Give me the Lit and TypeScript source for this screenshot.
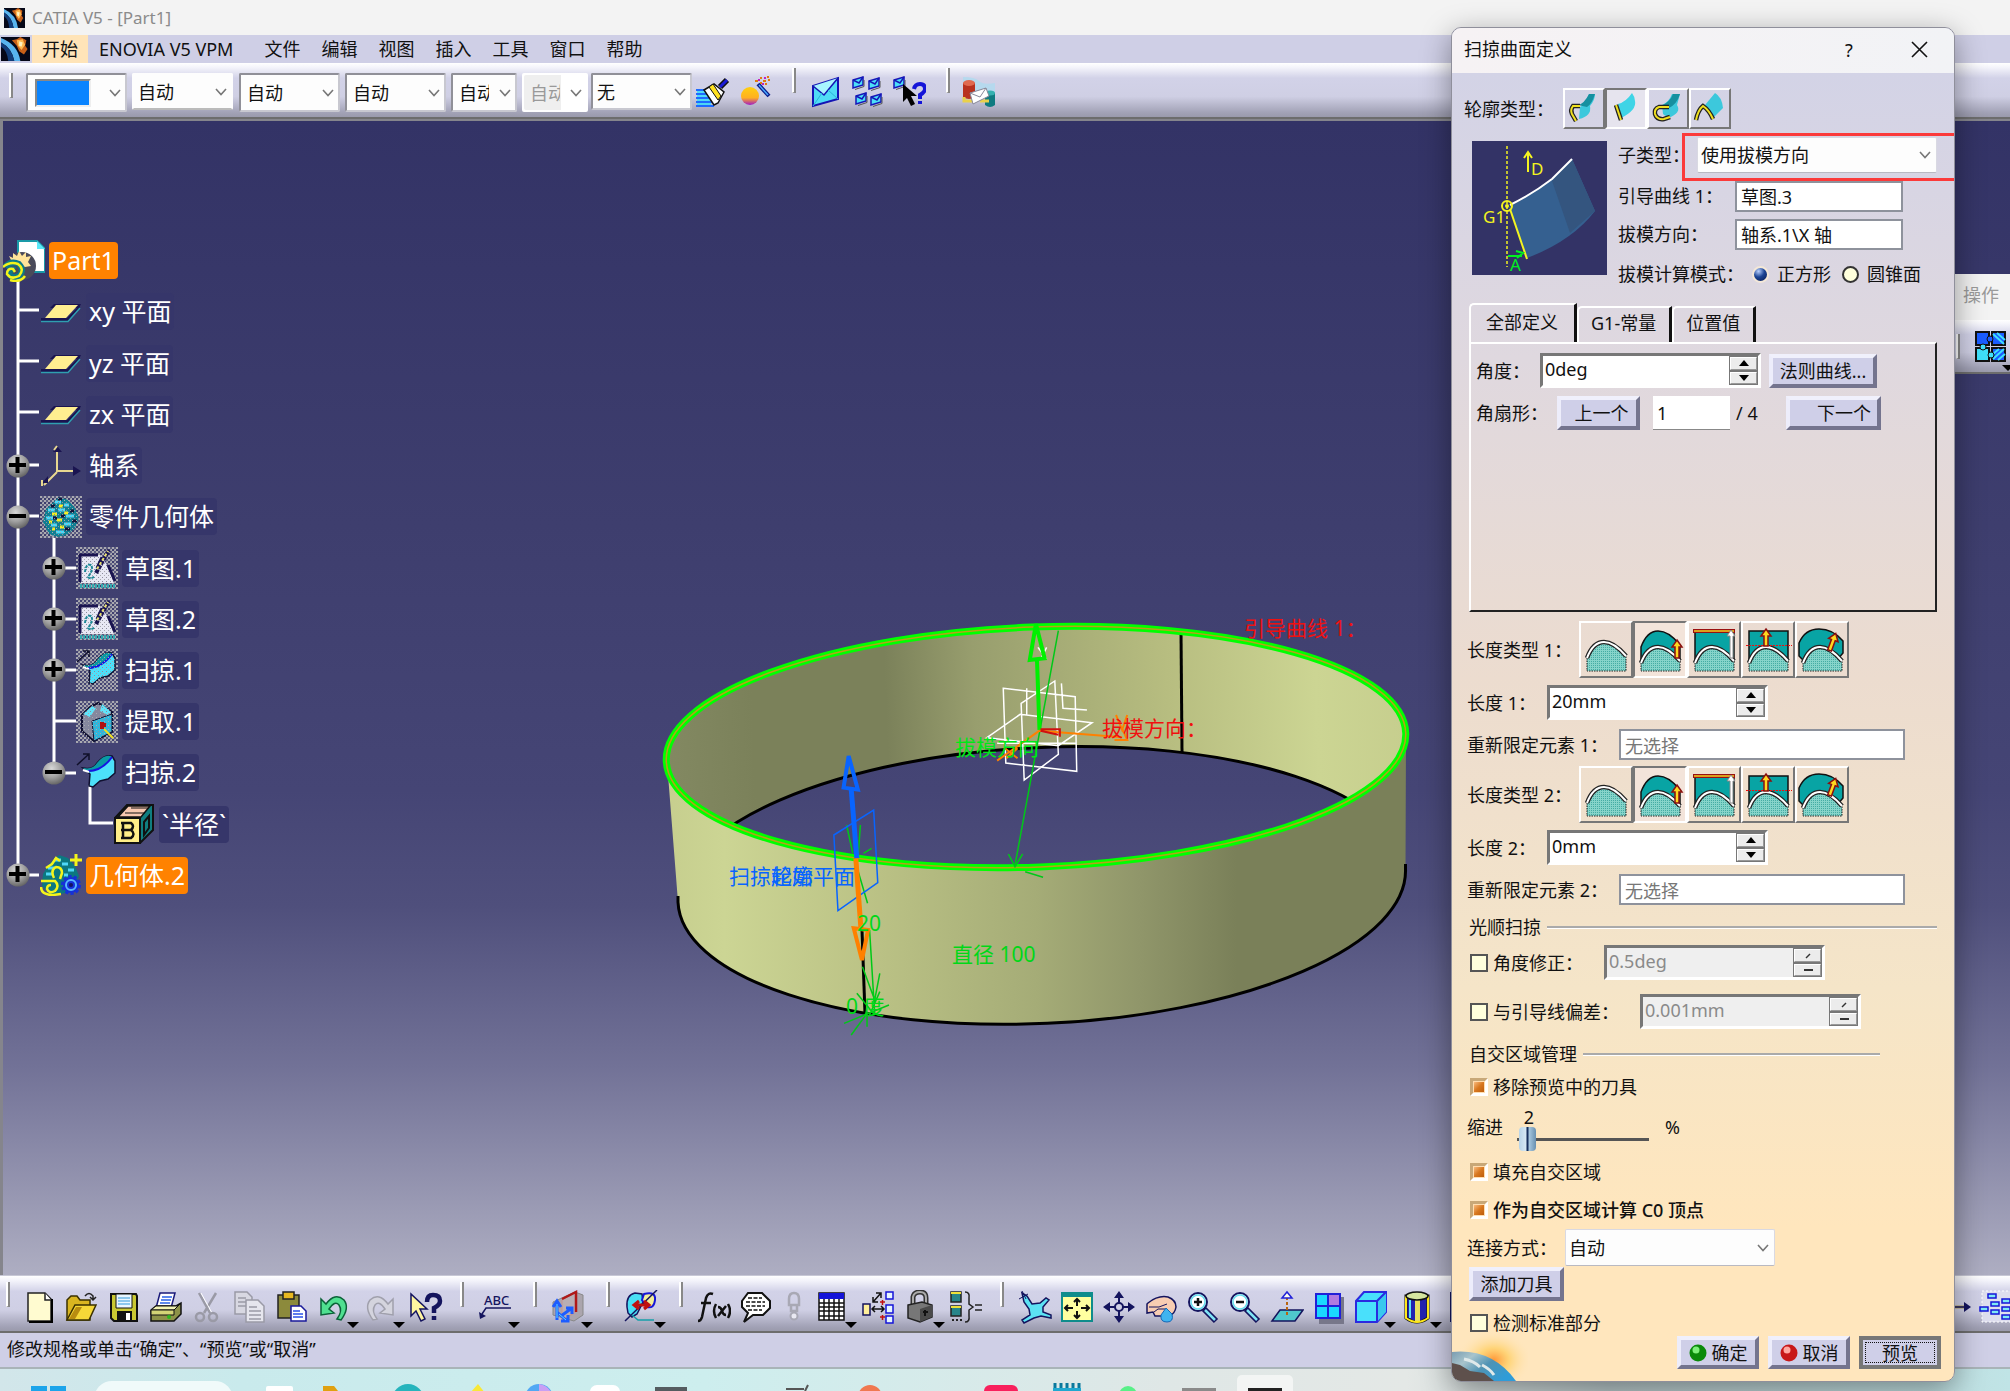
import { LitElement, html, svg, css } from "lit";
import type { TemplateResult, SVGTemplateResult } from "lit";
import { customElement } from "lit/decorators.js";
import { classMap } from "lit/directives/class-map.js";

/* ---------- shared look ---------- */

const base = css`
  :host {
    box-sizing: border-box;
    font-family: "Noto Sans", "Noto Sans CJK SC", sans-serif;
    font-size: 18px;
    line-height: 24px;
    color: #111;
  }
  *,
  *::before,
  *::after {
    box-sizing: border-box;
  }
  button,
  input,
  select {
    font: inherit;
    color: inherit;
    margin: 0;
    padding: 0;
    border: 0;
    border-radius: 0;
    background: none;
  }
  svg {
    display: block;
    flex: none;
  }
  .combo {
    position: relative;
    display: flex;
    align-items: stretch;
  }
  .combo select {
    appearance: none;
    width: 100%;
    background: #fdfdfd;
    border: 1px solid #d9d9e2;
    border-bottom-color: #b9b9c2;
    border-radius: 2px;
    padding: 0 28px 0 3px;
    overflow: hidden;
    opacity: 1;
  }
  .combo .chevron {
    position: absolute;
    right: 6px;
    top: 50%;
    margin-top: -4px;
    pointer-events: none;
  }
`;

const chevron = html`<svg class="chevron" width="12" height="8" viewBox="0 0 12 8" fill="none" stroke="#777" stroke-width="1.6"><path d="M1 1l5 5.5L11 1" /></svg>`;

const icon = (body: SVGTemplateResult, w = 34, h = 34) =>
  html`<svg width=${w} height=${h} viewBox="0 0 ${w} ${h}" aria-hidden="true">${body}</svg>`;

/* ---------- toolbar glyphs (34 x 34) ---------- */

const mail = (x: number, y: number) => svg`<g transform="translate(${x} ${y})"><path d="M1 3l10-3v8L1 11z" fill="#4ce0f8" stroke="#1616b8" stroke-width="1.5"/><path d="M1 3l6 3 4-6" fill="none" stroke="#1616b8" stroke-width="1.5"/><path d="M3 12.500l9-3V3" stroke="#555" fill="none"/></g>`;
const lens = (sign: SVGTemplateResult) => svg`<path d="M18 19l12 12" stroke="#14145e" stroke-width="6"/><path d="M19 20l10 10" stroke="#7fe4f5" stroke-width="2.500"/><circle cx="12" cy="12" r="9" fill="#e8fbff" stroke="#14145e" stroke-width="2"/><circle cx="12" cy="12" r="7" fill="#fff" stroke="#69dff0" stroke-width="1.500"/>${sign}`;

const glyph = {
  brush: svg`<path d="M0 15h18M0 19h20M0 23h18M0 27h22M0 31h18" stroke="#1f6bff" stroke-width="2"/><path d="M1 17h14M1 21h14M1 25h14M1 29h14" stroke="#29e0ff" stroke-width="1.500"/><path d="M8 15l10-6 10 8-6 11-4 2z" fill="#fff" stroke="#111" stroke-width="1.500"/><path d="M13 12l9 13 3-4-8-12z" fill="#ffe11f" stroke="#111"/><path d="M24 12l7-7" stroke="#111" stroke-width="6"/><path d="M24 12l7-7" stroke="#1b1bd8" stroke-width="3"/>`,
  wand: svg`<circle cx="12" cy="21" r="9" fill="url(#ball)"/><path d="M20 9l11 12" stroke="#0a1a8a" stroke-width="4"/><path d="M21 10l9 10" stroke="#4aa8ff" stroke-width="1.500"/><path d="M17 6h3M22 3h2M25 6h3M29 2h2M22 8h2M27 9h2M30 5h2" stroke="#e07a10" stroke-width="2"/><path d="M20 5h2M26 3h2M24 9h2" stroke="#c31fc3" stroke-width="2"/>`,
  envelope: svg`<path d="M5 11L30 3v21L5 31z" fill="#4fdcf6" stroke="#1414b4" stroke-width="2"/><path d="M5 11l11 9L30 3" fill="#a8f4ff" stroke="#1414b4" stroke-width="1.500"/><path d="M5 31l9-13M30 24l-10-9" stroke="#2bb4d8"/>`,
  mails: svg`${mail(2, 2)}${mail(18, 3)}${mail(5, 18)}${mail(20, 19)}`,
  mailHelp: svg`${mail(1, 2)}<path d="M11 9v18l4-4 4 8 4-2-4-8h6z" fill="#000"/><path d="M22 14q1-5 6-5 5 0 5 5 0 3-5 6v4M28 26v3" fill="none" stroke="#1515d8" stroke-width="4"/>`,
  transfer: svg`<path d="M1 2q12 0 16 4t16 2v14L1 12z" fill="#b6d9ee"/><path d="M1 8h12v14q-6 4-12 0z" fill="#b8321f"/><ellipse cx="7" cy="8" rx="6" ry="3" fill="#e06a50"/><path d="M23 18h10v12q-5 4-10 0z" fill="#0f7b80"/><ellipse cx="28" cy="18" rx="5" ry="2.500" fill="#35b1b0"/><path d="M2 22v4h12M18 26h9" fill="none" stroke="#ead14a" stroke-width="3"/><path d="M8 18l16-5 3 8-16 8z" fill="#fff" stroke="#889"/><path d="M8 18l10 4 6-9" fill="none" stroke="#889"/>`,
  new: svg`<path d="M5 3h17l6 6v22H5z" fill="#fffbd0" stroke="#222" stroke-width="1.500"/><path d="M22 3v7h6" fill="#fff" stroke="#222" stroke-width="1.500"/><path d="M29 9v23H6" fill="none" stroke="#000" stroke-width="2"/>`,
  open: svg`<path d="M2 10l4-4h6l3 4h10v20H2z" fill="#d9b520" stroke="#3a3000" stroke-width="1.500"/><path d="M2 30l8-15h21l-7 15z" fill="#f6d838" stroke="#3a3000" stroke-width="1.500"/><path d="M4 29l7-12h6l-7 12z" fill="#b88c10"/><path d="M20 6q4-5 8 0v3m-3-2l3 3 3-3" fill="none" stroke="#222" stroke-width="1.500"/>`,
  save: svg`<path d="M4 4h25l1 2v25H7l-3-3z" fill="#c9c832" stroke="#111" stroke-width="2"/><path d="M9 4h16v14H9z" fill="#e8f6ff" stroke="#111"/><path d="M11 8h12M11 11h12M11 14h12" stroke="#6db8e8" stroke-width="1.500"/><path d="M10 21h15v10H10z" fill="#111"/><path d="M19 23h4v7h-4z" fill="#fff"/>`,
  print: svg`<path d="M11 3h15l-4 15H7z" fill="#fff" stroke="#1a1a7a" stroke-width="1.500"/><path d="M13 7h10M12 10h10M11 13h10" stroke="#2a62e8" stroke-width="1.500"/><path d="M2 20l5-4h20l5-3v11l-7 7H2z" fill="#8d9248" stroke="#111" stroke-width="1.500"/><path d="M2 20l5-4h22l-4 4z" fill="#f2f3b4" stroke="#111"/><path d="M2 20h23v5H2z" fill="#d3d476" stroke="#111"/><path d="M25 20l7-7" stroke="#111"/><circle cx="20" cy="27" r="2" fill="#2bb81e"/>`,
  cut: svg`<path d="M8 3l11 20M25 3L13 23" stroke="#9a9aa6" stroke-width="2.500"/><path d="M10 3l11 20" stroke="#fff" stroke-width="1"/><circle cx="9" cy="27" r="4" fill="none" stroke="#9a9aa6" stroke-width="2.500"/><circle cx="22" cy="27" r="4" fill="none" stroke="#9a9aa6" stroke-width="2.500"/>`,
  copy: svg`<path d="M2 2h12l5 5v17H2z" fill="#d8d8e2" stroke="#9a9aa6" stroke-width="1.500"/><path d="M5 8h8M5 12h8M5 16h8" stroke="#9a9aa6" stroke-width="1.500"/><path d="M13 10h12l6 6v16H13z" fill="#e6e6ee" stroke="#9a9aa6" stroke-width="1.500"/><path d="M16 17h8M16 21h12M16 25h12M16 29h12" stroke="#9a9aa6" stroke-width="1.500"/>`,
  paste: svg`<path d="M3 5h21v23H3z" fill="#8c8a3c" stroke="#222" stroke-width="1.500"/><path d="M8 2h11v7H8z" fill="#e8b820" stroke="#222" stroke-width="1.500"/><path d="M16 16h10l5 5v10H16z" fill="#fff" stroke="#1a1a9a" stroke-width="1.500"/><path d="M18 21h7M18 24h10M18 27h10" stroke="#2a52e8" stroke-width="1.500"/>`,
  undo: svg`<path d="M4 9v16l13-2-5-4q6-9 10-4 4 6-2 14l4 1q9-12 3-20-9-8-18 4z" fill="#4fe090" stroke="#0b6238" stroke-width="1.500"/>`,
  redo: svg`<path d="M30 9v16l-13-2 5-4q-6-9-10-4-4 6 2 14l-4 1Q1 18 7 10q9-8 18 4z" fill="#d4d4de" stroke="#a0a0ac" stroke-width="1.500"/>`,
  help: svg`<path d="M2 4v22l5-5 5 10 4-2-5-10h7z" fill="#fff6a0" stroke="#14145e" stroke-width="1.500"/><path d="M18 12q0-7 6-7 7 0 7 6 0 4-6 7v5M25 26v4" fill="none" stroke="#14145e" stroke-width="4.500"/>`,
  body: svg`<path d="M2 12l22-10 8 3v20l-9 6-21-6z" fill="#aba5ad" stroke="#888"/><path d="M11 10l14-8v20l-14 8z" fill="#b9aeb4" stroke="#c89090"/><path d="M11 9L25 2v20" fill="none" stroke="#b01818" stroke-width="2.500"/><path d="M6 30V12m-4 5l4-6 4 6M6 22l10 9m1-6v6h-7M10 26l11-8m-6 0h6v6" fill="none" stroke="#1d5cff" stroke-width="3"/><path d="M6 28V14M8 24l7 6" stroke="#5cd8ff"/>`,
  measure: svg`<path d="M3 17q-1-12 8-14l7 1 1 8-6 12-5 3-4-4z" fill="#49dff5" stroke="#14145e" stroke-width="1.500"/><path d="M20 4q12-3 11 6t-8 7l-5-7z" fill="#f3ef9a" stroke="#1717d8" stroke-width="2"/><path d="M1 31L33 0" stroke="#14145e" stroke-width="1.500"/><path d="M10 15h15m-10-4l-5 4 5 4m5-8l5 4-5 4" fill="none" stroke="#c01010" stroke-width="3"/><path d="M8 25l6 5h16" stroke="#16a0aa" fill="none" stroke-width="1.500"/>`,
  fx: svg`<path d="M16 4q-5-2-7 4L5 27q-1 4-4 4M4 13h10M19 14q-4 7 0 14M31 14q4 7 0 14M21 17q3 0 4 4t4 4M29 16l-8 10" fill="none" stroke="#111" stroke-width="2.500"/>`,
  speech: svg`<path d="M9 3h14l8 8v7l-7 7H14l-9 7 4-9-6-6v-6z" fill="#fff" stroke="#111" stroke-width="2"/><path d="M9 8h14M7 12h19M7 16h19M9 20h14" stroke="#111" stroke-dasharray="4 1.500" stroke-width="1.500"/>`,
  chain: svg`<path d="M12 9q0-6 5-6t5 6v6H12zM14 15h6v6h-6z" fill="none" stroke="#a8a8b4" stroke-width="2.500"/><circle cx="17" cy="26" r="3.500" fill="#e9e9f2" stroke="#a8a8b4" stroke-width="2"/>`,
  table: svg`<path d="M4 3h25v27H4z" fill="#fff" stroke="#111" stroke-width="1.500"/><path d="M4 3h25v6H4z" fill="#1414d8"/><path d="M9 9v21M14 9v21M19 9v21M24 9v21M4 13h25M4 17h25M4 21h25M4 26h25" stroke="#111" stroke-width="1.500"/>`,
  links: svg`<path d="M2 14h7v11H2z" fill="#ffef9a" stroke="#14145e" stroke-width="1.500"/><path d="M25 2h7v7h-7zM25 15h7v8h-7zM25 26h7v7h-7z" fill="#e6f6ff" stroke="#1414d8" stroke-width="1.500"/><path d="M11 19h12m-9-3l-3 3 3 3m6-6l3 3-3 3M12 12l8-9m-5 0h5v5m-8-1v5h5" fill="none" stroke="#111" stroke-width="1.500"/><path d="M19 12h5M21.500 10v5M19 27h5M21.500 25v5" stroke="#c01010" stroke-width="1.500"/>`,
  lock: svg`<path d="M10 16V7q1-5 7-5t6 6v8" fill="none" stroke="#333" stroke-width="5"/><path d="M10 16V7q1-5 7-5t6 6v8" fill="none" stroke="#aaa" stroke-width="2"/><path d="M5 15l14-3 10 3v12l-12 5-12-4z" fill="#777" stroke="#222" stroke-width="1.500"/><path d="M17 19l12-4v12l-12 5z" fill="#4a4a4a"/><path d="M22 20v6M20 22h5" stroke="#111" stroke-width="2"/>`,
  equal: svg`<path d="M2 2h10v10H2zM2 16h10v10H2z" fill="#27858a" stroke="#222" stroke-width="1.500"/><path d="M2 3h10M2 17h10" stroke="#ede03a" stroke-width="2"/><path d="M3 30h2M7 30h2M11 30h2" stroke="#222" stroke-width="2"/><path d="M16 2q5 0 4 6v6l4 3-4 3v6q1 6-4 6M26 15h7M26 20h7" fill="none" stroke="#222" stroke-width="1.500"/>`,
  fly: svg`<path d="M4 3l5 3 5 8 8-1 6-5 3 2-6 7v5l8 3v3l-10-2-7 2-10 5-2-3 8-5-1-6-5-7z" fill="#5ce2f3" stroke="#14145e" stroke-width="1.500"/><path d="M1 9l9-5M4 1l4 8" stroke="#14145e"/>`,
  fit: svg`<path d="M2 3h30v28H2z" fill="#ffffa0" stroke="#0f8c8c" stroke-width="2"/><path d="M2 5h30" stroke="#0f8c8c" stroke-width="4"/><path d="M17 9v7m-3-4l3-3 3 3M17 28v-7m-3 4l3 3 3-3M5 18h8m-5-3l-3 3 3 3M29 18h-8m5-3l3 3-3 3" fill="none" stroke="#111" stroke-width="2"/>`,
  pan: svg`<path d="M17 3v28M3 17h28" stroke="#14145e" stroke-width="2"/><path d="M17 1l5 7H12zM17 33l5-7H12zM1 17l7-5v10zM33 17l-7-5v10z" fill="#14145e"/><circle cx="17" cy="17" r="4" fill="#d0d0e6" stroke="#14145e" stroke-width="2"/>`,
  rotate: svg`<path d="M4 13q10-8 20-6 8 3 8 10-1 7-7 9H11l-2-4-6 1v-9z" fill="#f8cdb2" stroke="#14145e" stroke-width="1.500"/><path d="M5 17h10l8-3M10 22l4-3h8" fill="none" stroke="#14145e"/><path d="M22 18l6 6q2 8-5 8t-6-7z" fill="#3fb4f0" stroke="#1468b8"/>`,
  zoomIn: lens(svg`<path d="M8 12h8M12 8v8" stroke="#111" stroke-width="2.500"/>`),
  zoomOut: lens(svg`<path d="M8 12h8" stroke="#111" stroke-width="2.500"/>`),
  normal: svg`<path d="M2 31l8-11h23l-8 11z" fill="#4fc8cc" stroke="#14145e" stroke-width="1.500"/><path d="M17 25V6" stroke="#b86410" stroke-width="2" stroke-dasharray="3 2"/><path d="M12 8l5-6 5 6z" fill="#ffe" stroke="#2020d8" stroke-width="1.500"/>`,
  views: svg`<path d="M7 7h25v27H7z" fill="#77778a"/><path d="M4 4h24v24H4z" fill="#1ad8ff" stroke="#2020d8" stroke-width="2"/><path d="M16 4v24M4 16h24" stroke="#2020d8" stroke-width="2"/><path d="M17 5h10v10H17z" fill="#b07ae0"/>`,
  cube: svg`<path d="M2 11L10 2h22v20l-9 10H2z" fill="#49e0fb" stroke="#2a2ae0" stroke-width="2"/><path d="M23 11l9-9v20l-9 10z" fill="#38c8ee"/><path d="M2 11h21v21M23 11l9-9" fill="none" stroke="#2a2ae0" stroke-width="2"/>`,
  cylinder: svg`<path d="M6 6v22q11 8 22 0V6z" fill="#2222b0" stroke="#111" stroke-width="3"/><path d="M6 6v22q11 8 22 0V6" fill="none" stroke="#ffe81a" stroke-width="2"/><path d="M15 8h5v23h-5z" fill="#e8e060"/><path d="M10 10v18" stroke="#5ce2f3" stroke-width="2"/><ellipse cx="17" cy="6" rx="11" ry="4" fill="#d6e6a0" stroke="#111" stroke-width="1.500"/>`,
  hidden: svg`<path d="M5 3h24v28H5z" fill="#d8d8ee" stroke="#14145e" stroke-width="2"/>`,
  note: svg`<text x="6" y="15" font-size="13" font-weight="500" fill="#14145e">ABC</text><path d="M33 18H8L4 24" fill="none" stroke="#14145e" stroke-width="1.500"/><path d="M1 22l1 7 6-3z" fill="#14145e"/>`,
  arrow: svg`<path d="M4 17h18" stroke="#b8a860" stroke-width="3"/><path d="M4 17h20" stroke="#14145e" stroke-width="1.500"/><path d="M22 12l7 5-7 5z" fill="#14145e"/>`,
  cluster: svg`<path d="M4 1h29v31H4z" fill="#dedeee" stroke="#fff" stroke-dasharray="2 2"/>${[[10, 4], [13, 12], [2, 17], [13, 20], [24, 9], [24, 17], [24, 25]].map(([x, y]) => svg`<rect x=${x} y=${y} width="8" height="4" fill="#7fe9f4" stroke="#1515d8" stroke-width="1.500"/>`)}`,
};

type Tool = { name: string; art: SVGTemplateResult; more?: boolean; slim?: boolean };

const toolGroups: Tool[][] = [
  [
    { name: "新建", art: glyph.new },
    { name: "打开", art: glyph.open },
    { name: "保存", art: glyph.save },
    { name: "打印", art: glyph.print },
    { name: "剪切", art: glyph.cut },
    { name: "复制", art: glyph.copy },
    { name: "粘贴", art: glyph.paste },
    { name: "撤销", art: glyph.undo, more: true },
    { name: "重做", art: glyph.redo, more: true },
    { name: "帮助", art: glyph.help },
  ],
  [{ name: "文本", art: glyph.note, more: true }],
  [{ name: "几何体", art: glyph.body, more: true }],
  [{ name: "测量", art: glyph.measure, more: true }],
  [
    { name: "公式", art: glyph.fx },
    { name: "注释", art: glyph.speech },
    { name: "链接", art: glyph.chain, slim: true },
    { name: "设计表", art: glyph.table, more: true },
    { name: "关系", art: glyph.links },
    { name: "锁定", art: glyph.lock, more: true },
    { name: "等效尺寸", art: glyph.equal },
  ],
  [
    { name: "飞行模式", art: glyph.fly },
    { name: "全部适应", art: glyph.fit },
    { name: "平移", art: glyph.pan },
    { name: "旋转", art: glyph.rotate },
    { name: "放大", art: glyph.zoomIn },
    { name: "缩小", art: glyph.zoomOut },
    { name: "法线视图", art: glyph.normal },
    { name: "多视图", art: glyph.views },
    { name: "等轴测视图", art: glyph.cube, more: true },
    { name: "着色", art: glyph.cylinder, more: true },
    { name: "隐藏", art: glyph.hidden },
  ],
];

/* ---------- specification tree ---------- */

const under = svg`<rect width="42" height="42" fill="url(#mesh)"/>`;
const over = svg`<rect width="42" height="42" fill="url(#veil)"/>`;
const planeArt = svg`<path d="M14 13h27l-2 4H10z" fill="#1a1450"/><path d="M16 14h22L26 27H5z" fill="#ffee90"/><path d="M1 27h26L40 14v3L28 30H1z" fill="#1a1450"/><path d="M1 30.500h27L40 17" fill="none" stroke="#2f9fb0" stroke-width="1.500"/>`;
const sketchArt = svg`${under}<path d="M5 8h20l6 10 7 18H5z" fill="#e8e8f4"/>${over}<path d="M3 8h19M4 8v27M32 18l7 16M26 10l-5 11" fill="none" stroke="#1a1450" stroke-width="3"/><path d="M9 25q1-9 6-7 3 4-3 12 2 3 7-1" fill="none" stroke="#1f8a98" stroke-width="2" stroke-dasharray="3 1"/><path d="M20 26L33 3" fill="none" stroke="#1a1450" stroke-width="4" stroke-dasharray="4 1"/><path d="M21 22L32 4" fill="none" stroke="#e8e070" stroke-width="2" stroke-dasharray="3 2"/><path d="M4 39h36" stroke="#36a8b0" stroke-width="4" stroke-dasharray="2 1"/>`;
const sweepShape = svg`<path d="M7 16q10 2 14-5 7-9 15-7l3 5v12l-7 6-8 2-7 6-4-1 1-12z" fill="#4ce0fa" stroke="#101030" stroke-width="1.500"/><path d="M7 16q10 2 14-5 7-9 14-7 0 6-11 12t-14 3z" fill="#0a9aa4"/><path d="M12 19q14 0 24-14" fill="none" stroke="#1414e0" stroke-width="2"/><path d="M7 18l6 2" stroke="#fff" stroke-width="2"/><path d="M1 13L13 2m-6 0h6v6" fill="none" stroke="#10102a" stroke-width="1.500"/>`;
const gearArt = svg`<path d="M19 1l9 3 7 8 4 10-4 10-8 7-10 2-8-3-6-12 3-13z" fill="#0f7e92"/><g fill="none" stroke-width="3"><path d="M8 14h7M15 6h6M6 22h7M18 14h7M26 20h8M11 29h6M16 36h8M24 28h7M24 9h5" stroke="#4fd8f8"/><path d="M12 18h5M19 10h4M17 24h5M24 17h4M12 33h3M9 26h3M20 31h4" stroke="#f8f020"/><path d="M11 10h4M13 22h4M25 33h5M32 25h5M21 20h4M30 15h4M18 3h4" stroke="#15153a"/></g>`;

type Row = { label: string; level: number; knob?: string; hot?: boolean; art: SVGTemplateResult };

const rows: Row[] = [
  { label: "Part1", level: 0, hot: true, art: svg`<path d="M15 1h19l8 8v23H15z" fill="#fff" stroke="#1a9aa8" stroke-width="2"/><path d="M34 1v8h8z" fill="#5ce8f8"/><circle cx="19" cy="26" r="14" fill="#4a4a5a"/><path d="M8 20l-2-4 4 2v-5l4 3 2-5 3 5 4-4v5l5-1-3 6 3 4-6 1z" fill="#ffe39a"/><path d="M2 27q6-7 14-3 6 6 0 12-8 3-10-3 1-5 6-3" fill="none" stroke="#0c7a86" stroke-width="6"/><path d="M0 27q7-6 15-3 7 5 1 12-8 4-12-2 0-6 6-5l2 3M7 40q10 3 15-4" fill="none" stroke="#f4f41a" stroke-width="2.500"/>` },
  { label: "xy 平面", level: 1, art: planeArt },
  { label: "yz 平面", level: 1, art: planeArt },
  { label: "zx 平面", level: 1, art: planeArt },
  { label: "轴系", level: 1, knob: "+", art: svg`<path d="M17 27V4M17 26h22M17 27L4 40" fill="none" stroke="#e8d890" stroke-width="2"/><path d="M13 7l4-6 5 6zM33 21l8 5-8 5zM8 31v7h-6z" fill="#1a1450"/><path d="M14 5l3-4M2 35v6" stroke="#e8d890" stroke-width="2"/>` },
  { label: "零件几何体", level: 1, knob: "-", art: svg`${under}${gearArt}${over}` },
  { label: "草图.1", level: 2, knob: "+", art: sketchArt },
  { label: "草图.2", level: 2, knob: "+", art: sketchArt },
  { label: "扫掠.1", level: 2, knob: "+", art: svg`${under}${sweepShape}${over}` },
  { label: "提取.1", level: 2, art: svg`${under}<path d="M6 14l8-8 8-4 14 9v20L18 40 6 30z" fill="#85889e" stroke="#101030" stroke-width="2"/><path d="M16 20l20-7v18l-18 9z" fill="#2fb8dc" stroke="#101030"/><path d="M7 13l9-8 4 2-6 9z" fill="#60e4fa"/><path d="M26 3l9 8-3 3-8-4z" fill="#60e4fa"/>${over}<path d="M24 24h6M26 21v7" stroke="#b01010" stroke-width="4"/><path d="M28 28l9 9" stroke="#f0e020" stroke-width="2"/>` },
  { label: "扫掠.2", level: 2, knob: "-", art: sweepShape },
  { label: "`半径`", level: 3, art: svg`<path d="M2 15L14 2h26v25L27 40H2z" fill="#107e80" stroke="#111" stroke-width="2"/><path d="M5 14L15 3h22L28 14z" fill="#f8c8b0" stroke="#111" stroke-width="1.500"/><path d="M12 10h20M18 5h18" stroke="#111"/><path d="M2 15h25v25H2z" fill="#ffee88" stroke="#111" stroke-width="2"/><path d="M8 20h10q4 3 0 7 5 4 0 8H8M10 20v15M8 27h10" fill="none" stroke="#111" stroke-width="2.500"/><path d="M31 19l5-6v12l-5 7z" fill="none" stroke="#111" stroke-width="2"/>` },
  { label: "几何体.2", level: 1, knob: "+", hot: true, art: svg`<path d="M19 1l9 3 7 8 4 10-4 10-8 7-16 2-9-9 1-12 6-10z" fill="#0c7880"/><path d="M8 14h7M14 6h7M6 20h6M22 10h6M28 16h6M24 21h4" stroke="#4fd8f8" stroke-width="3"/><path d="M1 27h14q5 5 0 10-6 3-8-2 0-4 4-4M1 33q0 8 12 8l8-1M14 24q-4-8 2-11 6 0 6 6l-2 6M6 14l6-4 4-6 4 3" fill="none" stroke="#f4f41a" stroke-width="2.500"/><circle cx="31" cy="31" r="8" fill="#1530d8" stroke="#1530d8" stroke-width="4" stroke-dasharray="3 2"/><circle cx="31" cy="31" r="5" fill="none" stroke="#58b8ff" stroke-width="2"/><circle cx="31" cy="31" r="2" fill="#141460"/><path d="M36 0v12M30 6h12" stroke="#f4f41a" stroke-width="3"/>` },
];

@customElement("spec-tree")
class SpecTree extends LitElement {
  static styles = [
    base,
    css`
      :host {
        display: block;
        position: relative;
        color: #fff;
        font-size: 25px;
        line-height: 30px;
      }
      .rows {
        display: flex;
        flex-direction: column;
        height: 666px;
        margin: 0;
        padding: 0;
        list-style: none;
        position: relative;
      }
      .row {
        flex: 1;
        display: flex;
        align-items: center;
      }
      .level1 {
        padding-left: 6px;
      }
      .level2 {
        padding-left: 42px;
      }
      .level3 {
        padding-left: 79px;
      }
      .slot {
        width: 24px;
        height: 24px;
        margin-right: 10px;
        flex: none;
      }
      .level0 .slot {
        width: 3px;
        margin: 0;
      }
      .knob {
        display: block;
        width: 24px;
        height: 24px;
      }
      .label {
        margin-left: 4px;
        padding: 3px 3px 4px;
        border-radius: 4px;
        background: #36366a;
        white-space: nowrap;
      }
      .hot {
        background: #ff8200;
      }
      .wires {
        position: absolute;
        left: 0;
        top: 0;
      }
      .wires .line {
        fill: none;
        stroke: #fff;
        stroke-width: 3px;
      }
    `,
  ];

  render() {
    return html`
      <svg class="wires" width="120" height="666">
        <defs>
          <pattern id="mesh" width="4" height="4" patternUnits="userSpaceOnUse">
            <rect width="2" height="2" fill="#a9a9b0" />
            <rect x="2" y="2" width="2" height="2" fill="#a9a9b0" />
            <rect x="2" width="2" height="2" fill="#5c5c80" />
          </pattern>
          <pattern id="veil" width="4" height="4" patternUnits="userSpaceOnUse">
            <rect width="1" height="1" fill="#a9a9b0" />
            <rect x="2" y="2" width="1" height="1" fill="#8c8c9c" />
          </pattern>
          <radialGradient id="steel" cx=".4" cy=".3" r=".8">
            <stop offset="0" stop-color="#d8d8d8" />
            <stop offset=".5" stop-color="#a0a0a0" />
            <stop offset="1" stop-color="#555" />
          </radialGradient>
        </defs>
        <path class="line" d="M18 38V640M18 75h21M18 126h21M18 177h21M18 230h21M18 281h21M18 640h21M54 296V538M54 333h22M54 384h22M54 435h22M54 486h22M54 538h22M90 550V588h23" />
      </svg>
      <ul class="rows">
        ${rows.map(
          (r) => html`<li class="row level${r.level}">
            <span class="slot">${r.knob
              ? html`<button class="knob" aria-label=${(r.knob === "+" ? "展开 " : "折叠 ") + r.label}>
                  ${icon(svg`<circle cx="12" cy="12" r="11.500" fill="url(#steel)"/><path d=${r.knob === "+" ? "M3 11h17M11.500 3v16" : "M3 11h17"} stroke="#000" stroke-width="4"/>`, 24, 24)}
                </button>`
              : ""}</span>
            ${icon(r.art, 42, 42)}
            <span class=${classMap({ label: true, hot: !!r.hot })}>${r.label}</span>
          </li>`,
        )}
      </ul>
    `;
  }
}

/* ---------- 3D model ---------- */

@customElement("model-view")
class ModelView extends LitElement {
  static styles = [
    base,
    css`
      :host {
        display: block;
      }
      .scene {
        width: 100%;
        height: 100%;
      }
      .wire * {
        vector-effect: non-scaling-stroke;
      }
      .tag {
        font-size: 21px;
      }
    `,
  ];

  render() {
    return html`<svg class="scene">
      <defs>
        <linearGradient id="inner" gradientUnits="userSpaceOnUse" x1="665" x2="1407" y1="0" y2="0">
          <stop offset="0" stop-color="#838962" />
          <stop offset=".12" stop-color="#7b815a" />
          <stop offset=".3" stop-color="#7b815a" />
          <stop offset=".42" stop-color="#989e6e" />
          <stop offset=".68" stop-color="#b7bd80" />
          <stop offset=".88" stop-color="#ccd593" />
          <stop offset="1" stop-color="#c6ce8e" />
        </linearGradient>
        <linearGradient id="outer" gradientUnits="userSpaceOnUse" x1="665" x2="1407" y1="0" y2="0">
          <stop offset="0" stop-color="#c6ce8e" />
          <stop offset=".08" stop-color="#ccd594" />
          <stop offset=".3" stop-color="#b9c084" />
          <stop offset=".5" stop-color="#a5ac77" />
          <stop offset=".64" stop-color="#90966a" />
          <stop offset=".77" stop-color="#7a8059" />
          <stop offset="1" stop-color="#7a8059" />
        </linearGradient>
        <mask id="wall" maskUnits="userSpaceOnUse" x="600" y="580" width="900" height="500">
          <rect x="600" y="580" width="900" height="500" fill="#fff" />
          <ellipse cx="1042" cy="885.500" rx="364" ry="138" transform="rotate(-2.650 1042 885.500)" fill="#000" />
        </mask>
        <mask id="front" maskUnits="userSpaceOnUse" x="600" y="580" width="900" height="500">
          <rect x="600" y="580" width="900" height="500" fill="#fff" />
          <ellipse cx="1036" cy="747" rx="370" ry="120" transform="rotate(-2.160 1036 747)" fill="#000" />
        </mask>
        <clipPath id="rim">
          <ellipse cx="1036" cy="747" rx="370" ry="120" transform="rotate(-2.160 1036 747)" />
        </clipPath>
      </defs>
      <g transform="translate(0 -121)" fill="none">
        <g mask="url(#wall)">
          <ellipse cx="1036" cy="747" rx="370" ry="120" transform="rotate(-2.160 1036 747)" fill="url(#inner)" />
        </g>
        <g clip-path="url(#rim)">
          <ellipse cx="1042" cy="885.500" rx="364" ry="138" transform="rotate(-2.650 1042 885.500)" stroke="#000" stroke-width="3" />
        </g>
        <path d="M1181 632L1182 752" stroke="#000" stroke-width="3" />
        <g mask="url(#front)">
          <path d="M667 762L678 902A364 138 -2.650 0 0 1405.500 869L1406 733z" fill="url(#outer)" />
        </g>
        <path d="M678 896V902A364 138 -2.650 0 0 1405.500 869V864" stroke="#000" stroke-width="3" />
        <path d="M862 930L865 1014" stroke="#000" stroke-width="3" />
        <ellipse cx="1036" cy="747" rx="370" ry="120" transform="rotate(-2.160 1036 747)" stroke="#00ff00" stroke-width="7" />
        <ellipse cx="1036" cy="747" rx="370" ry="120" transform="rotate(-2.160 1036 747)" stroke="#b8a018" stroke-width="1.500" />

        <g class="wire" transform="translate(640 600) scale(.5102 .33333)">
          <path stroke="#fff" stroke-width="1.500" d="M712 265L853 290L856 514L717 489zM747 310L813 243L820 463L753 540zM680 413L745 343L886 368L820 437zM758 265V345M826 250L829 325L876 330M855 430H700M780 142L797 178M797 142L785 178" />
          <path stroke="#00c818" stroke-width="1.500" d="M820 92L735 795M722 762L735 800L750 762M755 815L790 832M420 775L446 910M405 675L417 760M432 675L428 760M438 760L454 745M450 990L460 1240M436 1100L460 1200L470 1120M400 1270L488 1215M414 1305L445 1240V1280M425 1180L460 1245M470 1175L450 1245" />
          <path stroke="#00f000" stroke-width="4" d="M783 390L778 175M776 72L764 180L793 175z" />
          <path stroke="#ff8000" stroke-width="2" d="M783 392L945 412M930 420L955 420L945 385M783 392L700 482M933 345L945 390L955 345M715 445L740 475M740 445L718 475" />
          <path stroke="#d01010" stroke-width="2" d="M785 388L823 388L823 410M785 392L820 404" />
          <path stroke="#0864ff" stroke-width="1.500" d="M380 705L458 630L466 848L388 932z" />
          <path stroke="#0864ff" stroke-width="5" d="M425 775L414 568" />
          <path stroke="#0864ff" stroke-width="4" d="M409 468L399 563L427 569z" />
          <path stroke="#ff8000" stroke-width="5" d="M423 775L433 985" />
          <path stroke="#ff8000" stroke-width="4" d="M419 985L447 990L435 1080z" />
        </g>

        <g class="tag">
          <text x="1244" y="636" fill="#f01010">引导曲线 1：</text>
          <text x="1102" y="736" fill="#f01010">拔模方向：</text>
          <text x="955" y="755" fill="#00e818">拔模方向</text>
          <text x="729" y="884" fill="#0864ff">扫掠轮廓</text>
          <text x="771" y="884" fill="#0864ff">起始平面</text>
          <text x="952" y="962" fill="#00d818">直径 100</text>
          <text x="857" y="931" fill="#00d818">20</text>
          <text x="846" y="1014" fill="#00d818">0 度</text>
        </g>
      </g>
    </svg>`;
  }
}

/* ---------- sweep dialog ---------- */

const ribbon = (body: SVGTemplateResult, edge: string) => svg`${body}<path d=${edge} fill="none" stroke="#222" stroke-width="4.500"/><path d=${edge} fill="none" stroke="#f0e020" stroke-width="2"/>`;
const profileArt = [
  { name: "显式", art: ribbon(svg`<path d="M15 17q6-2 9-13h6q0 6-5 12 2 10-11 13z" fill="#3cc8dc"/><path d="M13 15q6-1 11-11h6q-3 10-8 13z" fill="#1690a0"/>`, "M15 16H8q-3 4-1 8l4 7") },
  { name: "直线", art: ribbon(svg`<path d="M11 14q8-2 14-11 3 4 3 8 2 9-14 17z" fill="#3fd4e6"/>`, "M9 15l5 15") },
  { name: "圆", art: ribbon(svg`<path d="M13 15Q20 12 23 4h8l-3 11q5 8-9 13l-5-4z" fill="#3cc8dc"/><path d="M12 16q9-4 12-12h7q-3 10-11 14z" fill="#1690a0"/>`, "M20 17h-10q-5 2-4 7 2 6 9 5l6-2") },
  { name: "二次曲线", art: ribbon(svg`<path d="M14 15L24 3q7 4 8 15L22 28z" fill="#3cc8dc"/>`, "M5 30q2-10 7-14 6 4 10 13") },
];

const arch = (y: number) => {
  const crown = `M6 ${y + 16}Q12 ${y} 23 ${y}Q33 ${y} 45 ${y + 14}`;
  return svg`<path d="${crown}V48H6z" fill="url(#teal)"/><path d="M6 ${y + 16}V48H45V${y + 14}" fill="none" stroke="#222" stroke-dasharray="1.500 1"/><path d=${crown} fill="none" stroke="#222" stroke-width="4.500"/><path d=${crown} fill="none" stroke="#fff" stroke-width="2"/>`;
};
const up = (x: number, y: number, h: number, fill: string) => svg`<path d="M${x} ${y}l5 7h-3v${h}h-4v-${h}h-3z" fill=${fill} stroke="#8a1010" stroke-width="1.500"/>`;
const lengthArt = [
  { name: "无", art: arch(19) },
  { name: "标准", art: svg`<path d="M6 38V24Q12 8 23 8T45 22V38z" fill="#08a4a4" stroke="#111" stroke-width="1.500"/>${arch(24)}${up(42, 17, 11, "#ffd820")}` },
  { name: "从曲面", art: svg`<path d="M6 38V8h39v30z" fill="#08a4a4" stroke="#111" stroke-width="1.500"/><path d="M4 8h42" stroke="#9a1010" stroke-width="4"/><path d="M5 8h40" stroke="#f0d020" stroke-width="1.500"/>${arch(24)}<path d="M42 7l4 6h-2v22h-3V13h-3z" fill="#fff" stroke="#888"/>` },
  { name: "从极值", art: svg`<path d="M6 38V8h39v30z" fill="#08a4a4" stroke="#111" stroke-width="1.500"/>${arch(24)}<path d="M3 22.500h46" stroke="#f01010" stroke-dasharray="2 1"/>${up(23, 6, 10, "#ffd820")}` },
  { name: "沿曲面", art: svg`<path d="M2 33V20Q8 6 22 6q14 0 24 12v12l-6 7H6z" fill="#08a4a4" stroke="#111" stroke-width="1.500"/>${arch(24)}<g transform="rotate(20 36 18)">${up(36, 10, 11, "#ffd820")}</g>` },
];

@customElement("sweep-dialog")
class SweepDialog extends LitElement {
  static styles = [
    base,
    css`
      :host {
        display: flex;
        flex-direction: column;
        overflow: hidden;
        border: 1px solid #8f8f9b;
        border-radius: 10px;
        background: linear-gradient(#d3d3e6 46px, #dfd8df 330px, #ecdccf 650px, #f5e5c8 960px, #ffe6bd 1200px);
        box-shadow: 0 8px 30px rgba(0, 0, 0, 0.4);
      }
      .head {
        display: flex;
        align-items: center;
        height: 45px;
        padding-left: 12px;
        background: linear-gradient(90deg, #f6f2f4, #f2f3f6);
      }
      .title {
        flex: 1;
        font-size: 18px;
        font-weight: 400;
        margin: 0;
        padding-bottom: 3px;
      }
      .head button {
        width: 70px;
        height: 45px;
        display: grid;
        place-items: center;
        padding-bottom: 2px;
      }
      .body {
        position: relative;
        padding: 15px 16px 12px 15px;
        display: flex;
        flex-direction: column;
      }
      .row {
        display: flex;
        align-items: center;
      }
      .profile {
        margin-left: -3px;
      }
      .profile .name {
        width: 99px;
      }
      .sq {
        width: 42px;
        height: 41px;
        display: grid;
        place-items: center;
        border: 2px solid;
        border-color: #fff #777 #777 #fff;
      }
      .sq.on {
        border-color: #777 #fff #fff #777;
        background: #e6e4ee;
      }
      .big {
        width: 54px;
        height: 57px;
      }
      .big.on {
        background: #f3e4da;
      }
      .guide {
        display: flex;
        margin-top: 8px;
        align-items: flex-start;
      }
      .diagram {
        margin: 4px 11px 0 5px;
      }
      .fields {
        flex: 1;
        display: grid;
        gap: 8px;
      }
      .fields .row {
        height: 30px;
      }
      .fields .row:first-child {
        height: 36px;
      }
      .fields .modes {
        height: 34px;
      }
      .name {
        white-space: nowrap;
        flex: none;
      }
      .w-sub {
        width: 79px;
      }
      .w-guide {
        width: 117px;
      }
      .sub {
        width: 240px;
        height: 36px;
      }
      .ring {
        position: absolute;
        left: 230px;
        top: 60px;
        width: 275px;
        height: 48px;
        border: 3px solid #fb3a3a;
        pointer-events: none;
      }
      .box {
        height: 31px;
        width: 168px;
        padding: 0 4px;
        background: #fff;
        border: 2px solid #8e929c;
      }
      .wide {
        width: 286px;
        color: #777;
      }
      .radio {
        appearance: none;
        width: 17px;
        height: 17px;
        border-radius: 50%;
        border: 2px solid #333;
        background: #ffffdc;
        margin-right: 8px;
      }
      .radio:checked {
        border-color: #f4e8d8;
        background: radial-gradient(circle at 35% 25%, #b8d0ff, #1c4494 45%, #06184e);
      }
      .pick {
        display: flex;
        align-items: center;
        margin-right: 11px;
      }
      .mode {
        width: 134px;
      }
      .tabs {
        display: flex;
        align-items: flex-end;
        margin: 12px 0 0 2px;
      }
      .tab {
        height: 36px;
        border-top: 2px solid #fff;
        border-left: 2px solid #fff;
        border-right: 3px solid #111;
        border-radius: 5px 0 0 0;
        padding: 0 13px 4px 12px;
        border-bottom: 0;
      }
      .tab.on {
        height: 39px;
        padding: 0 16px 4px 15px;
      }
      .panel {
        margin-left: 2px;
        min-height: 270px;
        width: 468px;
        padding: 9px 5px;
        border: 2px solid;
        border-color: #fff #222 #222 #fff;
        display: flex;
        flex-direction: column;
        gap: 8px;
      }
      .spin {
        display: flex;
        width: 221px;
        height: 35px;
        border: 3px solid;
        border-color: #777 #fff #fff #777;
        background: #fff;
      }
      .spin input {
        flex: 1;
        min-width: 0;
        padding: 0 2px 4px;
      }
      .arrows {
        width: 29px;
        display: grid;
        grid-template-rows: 1fr 1fr;
        background: #777;
        padding: 1px;
        gap: 2px;
      }
      .arrows button {
        display: grid;
        place-items: center;
        background: #ececec;
        border: 1px solid;
        border-color: #fff #999 #999 #fff;
      }
      .spin.off {
        background: #efefef;
        color: #8a8a8a;
      }
      .btn {
        height: 34px;
        padding: 0 10px;
        background: #cfcfe8;
        border: 4px solid;
        border-color: #f0f0fc #74748e #74748e #ededfb;
        display: flex;
        align-items: center;
        justify-content: center;
        gap: 8px;
        white-space: nowrap;
        line-height: 22px;
      }
      .w-angle {
        width: 64px;
      }
      .w-sector {
        width: 81px;
      }
      .law {
        width: 108px;
        margin-left: 8px;
        padding: 0 4px;
      }
      .prev {
        width: 83px;
        padding: 0 4px 0 10px;
      }
      .next {
        width: 95px;
        padding: 0 6px;
        justify-content: flex-end;
      }
      .count {
        width: 77px;
        height: 34px;
        padding: 0 4px;
        margin: 0 6px 0 13px;
        background: #fff;
        border-bottom: 1px solid #888;
      }
      .total {
        width: 50px;
      }
      .lengths {
        margin-top: 9px;
      }
      .w-type {
        width: 112px;
      }
      .w-len {
        width: 80px;
      }
      .w-limit {
        width: 152px;
      }
      .len {
        margin: 7px 0 9px;
      }
      .lengths + .lengths {
        margin-top: 6px;
      }
      .legend {
        display: flex;
        align-items: center;
        gap: 6px;
        line-height: 18px;
        margin-left: 2px;
        width: 468px;
      }
      .legend::after {
        content: "";
        flex: 1;
        height: 3px;
        border-top: 2px solid #aaa;
        border-bottom: 1px solid #fff;
      }
      .smooth {
        margin-top: 13px;
        margin-bottom: 9px;
      }
      .cross {
        width: 411px;
        margin: 16px 0 13px 2px;
      }
      .tick {
        appearance: none;
        width: 18px;
        height: 18px;
        flex: none;
        margin: 0 5px 0 3px;
        background: #ffffdc;
        border: 2px solid #555;
      }
      .tick:checked {
        border: 3px solid;
        border-color: #c8a878 #fff #fff #c8a878;
        background: linear-gradient(135deg, #ffc890, #d87820 50%, #b85808);
        background-clip: padding-box;
        box-shadow: inset 0 0 0 1px #ffddb0;
      }
      .check {
        height: 22px;
        display: flex;
        align-items: center;
      }
      .tol {
        height: 35px;
      }
      .tol .check {
        width: 137px;
      }
      .dev {
        margin-top: 14px;
      }
      .dev .check {
        width: 173px;
      }
      .shrink {
        height: 46px;
        margin: 11px 0 6px;
        align-items: flex-start;
        padding-top: 6px;
      }
      .slide {
        width: 132px;
        margin: -8px 16px 0 14px;
        display: flex;
        flex-direction: column;
      }
      .slide output {
        width: 24px;
        text-align: center;
        line-height: 20px;
      }
      .slide input {
        appearance: none;
        width: 132px;
        height: 24px;
        background: linear-gradient(#555, #555) 0 50% / 100% 3px no-repeat;
      }
      .slide input::-webkit-slider-thumb {
        appearance: none;
        width: 17px;
        height: 24px;
        border-radius: 4px;
        background: linear-gradient(90deg, #b8d4e8, #d6e8f4 42%, #16305e 46%, #16305e 54%, #a8c8e0 58%, #6890b0);
      }
      .vertex {
        margin: 16px 0 8px;
        font-weight: 500;
      }
      .join {
        width: 210px;
        height: 37px;
      }
      .w-join {
        width: 98px;
      }
      .add {
        width: 95px;
        margin: 1px 0 11px 2px;
        padding: 0 4px;
      }
      .foot {
        display: flex;
        justify-content: flex-end;
        gap: 9px;
        margin: 2px -3px 0 0;
      }
      .foot .btn {
        width: 82px;
        height: 33px;
        padding: 0;
        gap: 5px;
      }
      .foot .focus {
        border-color: #777;
        outline: 1px dotted #111;
        outline-offset: -7px;
        background: #cfcfe8;
      }
      .globe {
        position: absolute;
        left: 0;
        bottom: 0;
      }
    `,
  ];

  private spin(id: string, value: string, off = false): TemplateResult {
    return html`<span class=${classMap({ spin: true, off })}>
      <input id=${id} .value=${value} ?disabled=${off} />
      <span class="arrows">
        <button aria-label="增加" ?disabled=${off}>${icon(off ? svg`<path d="M4 7l4-4" stroke="#333" stroke-width="1.500"/>` : svg`<path d="M6 1l5 6H1z"/>`, 12, 8)}</button>
        <button aria-label="减少" ?disabled=${off}>${icon(off ? svg`<path d="M2 4h9" stroke="#333" stroke-width="2"/>` : svg`<path d="M6 7l5-6H1z"/>`, 12, 8)}</button>
      </span>
    </span>`;
  }

  private lengthBlock(n: number, value: string) {
    return html`<div class="lengths">
      <div class="row">
        <span class="name w-type">长度类型 ${n}：</span>
        ${lengthArt.map((a, i) => html`<button class=${classMap({ sq: true, big: true, on: i === 1 })} aria-label=${a.name}>${icon(a.art, 50, 53)}</button>`)}
      </div>
      <div class="row len"><label class="name w-len" for="len${n}">长度 ${n}：</label>${this.spin(`len${n}`, value)}</div>
      <div class="row"><label class="name w-limit" for="lim${n}">重新限定元素 ${n}：</label><input class="box wide" id="lim${n}" .value=${"无选择"} readonly /></div>
    </div>`;
  }

  render() {
    return html`
      <svg width="0" height="0">
        <defs>
          <pattern id="teal" width="2" height="2" patternUnits="userSpaceOnUse">
            <rect width="2" height="2" fill="#86d4ca" />
            <rect width="1" height="1" fill="#45aca4" />
          </pattern>
        </defs>
      </svg>
      <header class="head">
        <h1 class="title">扫掠曲面定义</h1>
        <button aria-label="帮助">?</button>
        <button aria-label="关闭">${icon(svg`<path d="M1 1l15 15M16 1L1 16" stroke="#111" stroke-width="1.600"/>`, 17, 17)}</button>
      </header>
      <div class="body">
        <svg class="globe" width="80" height="60" viewBox="0 0 80 60">
          <defs>
            <radialGradient id="glow" cx=".55" cy=".65" r=".5">
              <stop offset="0" stop-color="#ff9838" />
              <stop offset=".4" stop-color="#ffd068" stop-opacity=".8" />
              <stop offset="1" stop-color="#ffe6bd" stop-opacity="0" />
            </radialGradient>
            <linearGradient id="earth" x1="0" x2="1" y1="0" y2=".6">
              <stop offset="0" stop-color="#7a9cb0" />
              <stop offset=".3" stop-color="#a8c4cc" />
              <stop offset=".6" stop-color="#4f93b4" />
              <stop offset="1" stop-color="#2f9cd8" />
            </linearGradient>
          </defs>
          <rect width="76" height="60" fill="url(#glow)" />
          <path d="M0 31q40-4 64 29H0z" fill="url(#earth)" />
          <path d="M0 42l8 2 10 6 14 2 10 8H0z" fill="#5e504c" />
          <path d="M12 38q10 2 16 8M30 44q8 4 12 10" fill="none" stroke="#dfe9ea" stroke-width="3" />
        </svg>
        <div class="row profile">
          <span class="name">轮廓类型：</span>
          ${profileArt.map((p, i) => html`<button class=${classMap({ sq: true, on: i === 1 })} aria-label=${p.name}>${icon(p.art, 38, 37)}</button>`)}
        </div>
        <div class="guide">
          <svg class="diagram" width="135" height="134" viewBox="0 0 135 134">
            <rect width="135" height="134" fill="#333366" />
            <path d="M37 66Q62 52 80 38L100 18L123 70Q100 100 55 117z" fill="#356090" />
            <path d="M80 40L100 18L123 70L98 92z" fill="#34557f" />
            <path d="M38 64Q62 52 80 38L100 18" fill="none" stroke="#fff" stroke-width="2" />
            <path d="M35 5V126" stroke="#f4f420" stroke-width="1.500" stroke-dasharray="3 2" />
            <path d="M38 68L55 118" stroke="#f4f420" stroke-width="2" />
            <circle cx="35" cy="65" r="5" fill="none" stroke="#f4f420" stroke-width="2" />
            <circle cx="35" cy="65" r="2" fill="#f4f420" />
            <path d="M56 31V12M52 17L56 11L60 17" fill="none" stroke="#f4f420" stroke-width="2" />
            <path d="M36 115H50M44 110L51 112L45 117" fill="none" stroke="#00f020" stroke-width="2" />
            <text x="59" y="34" font-size="17" fill="#f4f420">D</text>
            <text x="11" y="82" font-size="17" fill="#f4f420">G1</text>
            <text x="38" y="130" font-size="17" fill="#00f020">A</text>
          </svg>
          <div class="fields">
            <div class="row">
              <label class="name w-sub" for="sub">子类型：</label>
              <span class="combo sub"><select id="sub"><option>使用拔模方向</option></select>${chevron}</span>
            </div>
            <div class="row"><label class="name w-guide" for="g1">引导曲线 1：</label><input class="box" id="g1" .value=${"草图.3"} /></div>
            <div class="row"><label class="name w-guide" for="dir">拔模方向：</label><input class="box" id="dir" .value=${"轴系.1\\X 轴"} /></div>
            <div class="row modes">
              <span class="name mode">拔模计算模式：</span>
              <label class="pick"><input class="radio" type="radio" name="mode" checked />正方形</label>
              <label class="pick"><input class="radio" type="radio" name="mode" />圆锥面</label>
            </div>
          </div>
        </div>
        <div class="tabs" role="tablist">
          <button class="tab on" role="tab" aria-selected="true">全部定义</button>
          <button class="tab" role="tab">G1-常量</button>
          <button class="tab" role="tab">位置值</button>
        </div>
        <div class="panel">
          <div class="row">
            <label class="name w-angle" for="angle">角度：</label>${this.spin("angle", "0deg")}
            <button class="btn law">法则曲线...</button>
          </div>
          <div class="row">
            <label class="name w-sector" for="sector">角扇形：</label>
            <button class="btn prev">上一个</button>
            <input class="count" id="sector" .value=${"1"} />
            <span class="total">/ 4</span>
            <button class="btn next">下一个</button>
          </div>
        </div>
        ${this.lengthBlock(1, "20mm")} ${this.lengthBlock(2, "0mm")}
        <div class="legend smooth">光顺扫掠</div>
        <div class="row tol"><label class="check"><input class="tick" type="checkbox" />角度修正：</label>${this.spin("fix", "0.5deg", true)}</div>
        <div class="row tol dev"><label class="check"><input class="tick" type="checkbox" />与引导线偏差：</label>${this.spin("dev", "0.001mm", true)}</div>
        <div class="legend cross">自交区域管理</div>
        <label class="check"><input class="tick" type="checkbox" checked />移除预览中的刀具</label>
        <div class="row shrink">
          <label class="name" for="shrink">缩进</label>
          <span class="slide"><output>2</output><input id="shrink" type="range" min="0" max="100" .value=${"2"} /></span>
          <span>%</span>
        </div>
        <label class="check"><input class="tick" type="checkbox" checked />填充自交区域</label>
        <label class="check vertex"><input class="tick" type="checkbox" checked />作为自交区域计算 C0 顶点</label>
        <div class="row">
          <label class="name w-join" for="join">连接方式：</label>
          <span class="combo join"><select id="join"><option>自动</option></select>${chevron}</span>
        </div>
        <button class="btn add">添加刀具</button>
        <label class="check"><input class="tick" type="checkbox" />检测标准部分</label>
        <div class="foot">
          <button class="btn">${icon(svg`<circle cx="9" cy="9" r="8.500" fill="#0a8a0a"/><circle cx="7" cy="6" r="3.500" fill="#7df07a"/>`, 18, 18)}确定</button>
          <button class="btn">${icon(svg`<circle cx="9" cy="9" r="8.500" fill="#c81818"/><circle cx="7" cy="6" r="3.500" fill="#ffa8a0"/>`, 18, 18)}取消</button>
          <button class="btn focus">预览</button>
        </div>
        <span class="ring"></span>
      </div>
    `;
  }
}

/* ---------- application shell ---------- */

const logo = (w: number, h: number) => html`<svg width=${w} height=${h} viewBox="0 0 24 22" preserveAspectRatio="none"><rect width="24" height="22" fill="#060818"/><path d="M9 3l4-1 3-2 5 3-1 5 2 3-3 5-4-3-2-5z" fill="#c86018"/><path d="M13 3l5-1 2 5-3 5-3-4z" fill="#ffb850"/><path d="M15 4l3 1-1 4-2-1z" fill="#fff2c0"/><path d="M0 1q14 6 16 21h-5Q9 10 0 5z" fill="#58b4ee"/><path d="M0 5q9 5 11 17H6Q5 12 0 9z" fill="#123c78"/></svg>`;

const menus = ["开始", "ENOVIA V5 VPM", "文件", "编辑", "视图", "插入", "工具", "窗口", "帮助"];
const combos = [
  { name: "颜色", cls: "c-wide swatchy", text: "" },
  { name: "透明度", cls: "c-wide flat", text: "自动" },
  { name: "线宽", cls: "c-wide c-lead", text: "自动" },
  { name: "线型", cls: "c-wide c-lead", text: "自动" },
  { name: "点类型", cls: "c-slim c-lead", text: "自动" },
  { name: "渲染样式", cls: "c-slim c-lead off", text: "自动" },
  { name: "图层", cls: "c-wide short", text: "无" },
];

@customElement("app-root")
class AppRoot extends LitElement {
  static styles = [
    base,
    css`
      :host {
        display: flex;
        flex-direction: column;
        min-height: 100vh;
        position: relative;
        overflow: hidden;
        background: #cfcfe6;
      }
      .defs {
        position: absolute;
      }
      .titlebar {
        display: flex;
        align-items: center;
        gap: 7px;
        height: 35px;
        padding-left: 4px;
        background: #f3f3f3;
        color: #8b8b8b;
        font-size: 17px;
      }
      .menubar {
        display: flex;
        align-items: center;
        height: 28px;
        padding-left: 1px;
        gap: 1px;
      }
      .menubar button {
        height: 28px;
        padding: 0 10px;
        line-height: 26px;
        white-space: nowrap;
      }
      .menubar .latin {
        padding-right: 20px;
      }
      .menubar .active {
        background: #ffe4b8;
        margin-left: 1px;
      }
      .bar {
        display: flex;
        background: linear-gradient(#fff, #f4f4fb 8%, #d2d2e8 28%, #cfcfe4 62%, #a2a2b6 92%, #9a9aac);
        border-bottom: 2px solid #6d6d6d;
      }
      .top {
        height: 56px;
        align-items: flex-start;
        padding: 10px 0 0 26px;
        position: relative;
      }
      .combos {
        display: flex;
        gap: 5px;
      }
      .top .combo {
        height: 39px;
        background: #fff;
        border: 2px solid #909098;
        border-right-color: #c8c8d0;
        border-bottom-color: #c8c8d0;
        border-radius: 2px;
      }
      .top .combo select {
        border: 0;
        padding-left: 4px;
        padding-right: 26px;
      }
      .top .combo .chevron {
        right: 4px;
      }
      .top .flat {
        height: 37px;
        border-color: #fdfdfd #fdfdfd #bbb #fdfdfd;
        margin-right: 1px;
      }
      .top .short {
        height: 37px;
        margin-left: -2px;
      }
      .top .c-lead select {
        padding-left: 6px;
      }
      .c-wide {
        width: 101px;
      }
      .c-slim {
        width: 66px;
      }
      .top .off {
        color: #999;
        border-color: #fff;
      }
      .top .off select {
        background: linear-gradient(90deg, #efefef 60%, #fff 60%);
      }
      .swatch {
        position: absolute;
        left: 7px;
        top: 4px;
        width: 56px;
        height: 28px;
        background: #0a84ff;
        border: 2px solid;
        border-color: #888 #eee #eee #888;
        pointer-events: none;
      }
      .grip {
        width: 4px;
        height: 25px;
        border: 1px solid;
        border-color: #fff #888 #888 #fff;
        border-width: 0 2px 1px 2px;
        flex: none;
      }
      .top .grip {
        margin: -5px 8px 0 16px;
      }
      .top .first {
        position: absolute;
        left: 9px;
        top: 10px;
        margin: 0;
      }
      .tool {
        position: relative;
        width: 42px;
        height: 54px;
        display: grid;
        place-items: center;
        padding-top: 8px;
        flex: none;
      }
      .top .tool {
        height: 38px;
        padding: 0;
      }
      .styles {
        display: flex;
      }
      .more {
        width: 46px;
        padding-right: 4px;
      }
      .more::after {
        content: "";
        position: absolute;
        right: 0;
        bottom: 2px;
        border: 6px solid transparent;
        border-top-color: #000;
        border-bottom: 0;
      }
      .slim {
        width: 34px;
      }
      .bottom {
        height: 58px;
        border-top: 1px solid #c8c8d6;
      }
      .group {
        display: flex;
      }
      .bottom .grip {
        margin: 6px 10px 0 13px;
      }
      .bottom .lead {
        margin: 6px 9px 0 6px;
      }
      .tail {
        margin-left: auto;
      }
      .tail .tool {
        width: 38px;
      }
      .tail .tool:last-child {
        width: 32px;
      }
      .view {
        position: relative;
        flex: 1;
        min-height: 900px;
        border-left: 3px solid #85858c;
        border-top: 2px solid #85858c;
        background: linear-gradient(#333366, #3e3e6e 35%, #454575 58%, #4f4f7c 68%, #727297 82%, #aeaec2);
      }
      .model {
        position: absolute;
        inset: 0 0 0 -3px;
      }
      .tree {
        position: relative;
        margin: 114px 0 0 -3px;
        width: 260px;
      }
      .status {
        height: 36px;
        padding: 4px 7px;
        border-bottom: 2px solid #a9b4b8;
      }
      .taskbar {
        height: 22px;
        overflow: hidden;
        background: linear-gradient(90deg, #d2e6ea, #c9eaec 12%, #cdeeee 35%, #dfe7e6 58%, #e4e8e6 70%, #b8c8ca 80%, #c0e4e6);
      }
      .ops {
        position: absolute;
        right: 0;
        top: 274px;
        width: 56px;
      }
      .opstitle {
        height: 46px;
        padding: 9px 0 0 9px;
        background: #f3f3f3;
        color: #9a9a9a;
      }
      .ops .bar {
        height: 54px;
        align-items: center;
        padding-left: 2px;
      }
      .ops .tool {
        width: 46px;
        padding: 0;
        margin-left: 8px;
      }
      .dialog {
        position: absolute;
        right: 55px;
        top: 27px;
        width: 504px;
      }
    `,
  ];

  private tool(t: Tool) {
    return html`<button class=${classMap({ tool: true, more: !!t.more, slim: !!t.slim })} aria-label=${t.name}>${icon(t.art)}</button>`;
  }

  render() {
    return html`
      <svg class="defs" width="0" height="0">
        <defs>
          <linearGradient id="ball" x1="0" x2="0" y1="0" y2="1">
            <stop offset="0" stop-color="#ffcf10" />
            <stop offset=".6" stop-color="#ffb020" />
            <stop offset="1" stop-color="#a018c8" />
          </linearGradient>
        </defs>
      </svg>
      <header class="titlebar">${logo(21, 20)}<span>CATIA V5 - [Part1]</span></header>
      <nav class="menubar">
        ${logo(29, 24)}
        ${menus.map((m, i) => html`<button class=${classMap({ active: i === 0, latin: i === 1 })}>${m}</button>`)}
      </nav>
      <div class="bar top">
        <span class="grip first"></span>
        <div class="combos">
          ${combos.map(
            (c, i) => html`<span class="combo ${c.cls}">
              <select aria-label=${c.name} ?disabled=${c.cls.includes("off")}><option>${c.text}</option></select>
              ${i === 0 ? html`<span class="swatch"></span>` : ""}${chevron}
            </span>`,
          )}
        </div>
        <div class="styles">
          ${this.tool({ name: "绘制器", art: glyph.brush })}${this.tool({ name: "图形属性向导", art: glyph.wand })}
        </div>
        <span class="grip"></span>
        ${this.tool({ name: "发送邮件", art: glyph.envelope })}${this.tool({ name: "全部邮件", art: glyph.mails })}${this.tool({ name: "邮件帮助", art: glyph.mailHelp })}
        <span class="grip"></span>
        ${this.tool({ name: "传输", art: glyph.transfer })}
      </div>
      <main class="view">
        <model-view class="model"></model-view>
        <spec-tree class="tree"></spec-tree>
      </main>
      <div class="bar bottom">
        ${toolGroups.map((g, i) => html`<span class="grip ${i === 0 ? "lead" : ""}"></span><div class="group">${g.map((t) => this.tool(t))}</div>`)}
        <div class="group tail">${this.tool({ name: "下一步", art: glyph.arrow })}${this.tool({ name: "目录", art: glyph.cluster })}</div>
      </div>
      <div class="status">修改规格或单击“确定”、“预览”或“取消”</div>
      <footer class="taskbar">
        <svg width="1400" height="22" aria-hidden="true">
          <path d="M31 17h16v5H31zM50 17h16v5H50z" fill="#1ca4ea" />
          <rect x="94" y="12" width="139" height="40" rx="18" fill="#f0fafa" />
          <rect x="266" y="17" width="27" height="10" rx="2" fill="#fff" />
          <path d="M323 17h11l4 5h-15z" fill="#e0a010" />
          <circle cx="408" cy="31" r="16" fill="#26b4bc" />
          <path d="M478 15l7 9h-15z" fill="#f8e838" />
          <circle cx="539" cy="29" r="14" fill="#52a8f4" />
          <path d="M539 15q8 1 12 8h-12z" fill="#c8a0f4" />
          <rect x="590" y="16" width="30" height="20" rx="7" fill="#fff" />
          <path d="M655 18h32v4h-32z" fill="#555c60" />
          <path d="M786 20h18M805 22l3-6" stroke="#555" stroke-width="2" />
          <circle cx="870" cy="28" r="12" fill="#f07850" />
          <rect x="984" y="16" width="34" height="20" rx="6" fill="#f8205c" />
          <path d="M1055 14v7M1061 14v7M1067 14v7M1073 14v7M1079 14v7" stroke="#0a789c" stroke-width="3" />
          <path d="M1053 19h28v3h-28z" fill="#20a8d0" />
          <circle cx="1128" cy="26" r="9" fill="#58f088" />
          <path d="M1182 19h34v3h-34z" fill="#8a8a8a" />
          <rect x="1237" y="6" width="56" height="30" rx="5" fill="#f3f5f4" />
          <path d="M1248 19h34v3h-34z" fill="#222" />
        </svg>
      </footer>
      <aside class="ops">
        <div class="opstitle">操作</div>
        <div class="bar">
          <span class="grip"></span>
          <button class="tool more" aria-label="接合">${icon(svg`<path d="M2 3h13v13H2zM18 3h13v13H18z" fill="#1a5cff" stroke="#111" stroke-width="2"/><path d="M2 19h13v13H2z" fill="#3fe0fa" stroke="#111" stroke-width="2"/><path d="M18 19h13v13H18z" fill="#1a5cff" stroke="#111" stroke-width="2"/><path d="M19 5l11 10M23 4l8 7M19 30l11-10M19 25l6-5M24 31l7-6" stroke="#3fe0fa" stroke-width="2"/><circle cx="16" cy="10" r="3" fill="#1a5cff" stroke="#111"/><circle cx="9" cy="18" r="3" fill="#3fe0fa" stroke="#111"/><circle cx="17" cy="26" r="3" fill="#3fe0fa" stroke="#111"/>`)}</button>
        </div>
      </aside>
      <sweep-dialog class="dialog"></sweep-dialog>
    `;
  }
}
